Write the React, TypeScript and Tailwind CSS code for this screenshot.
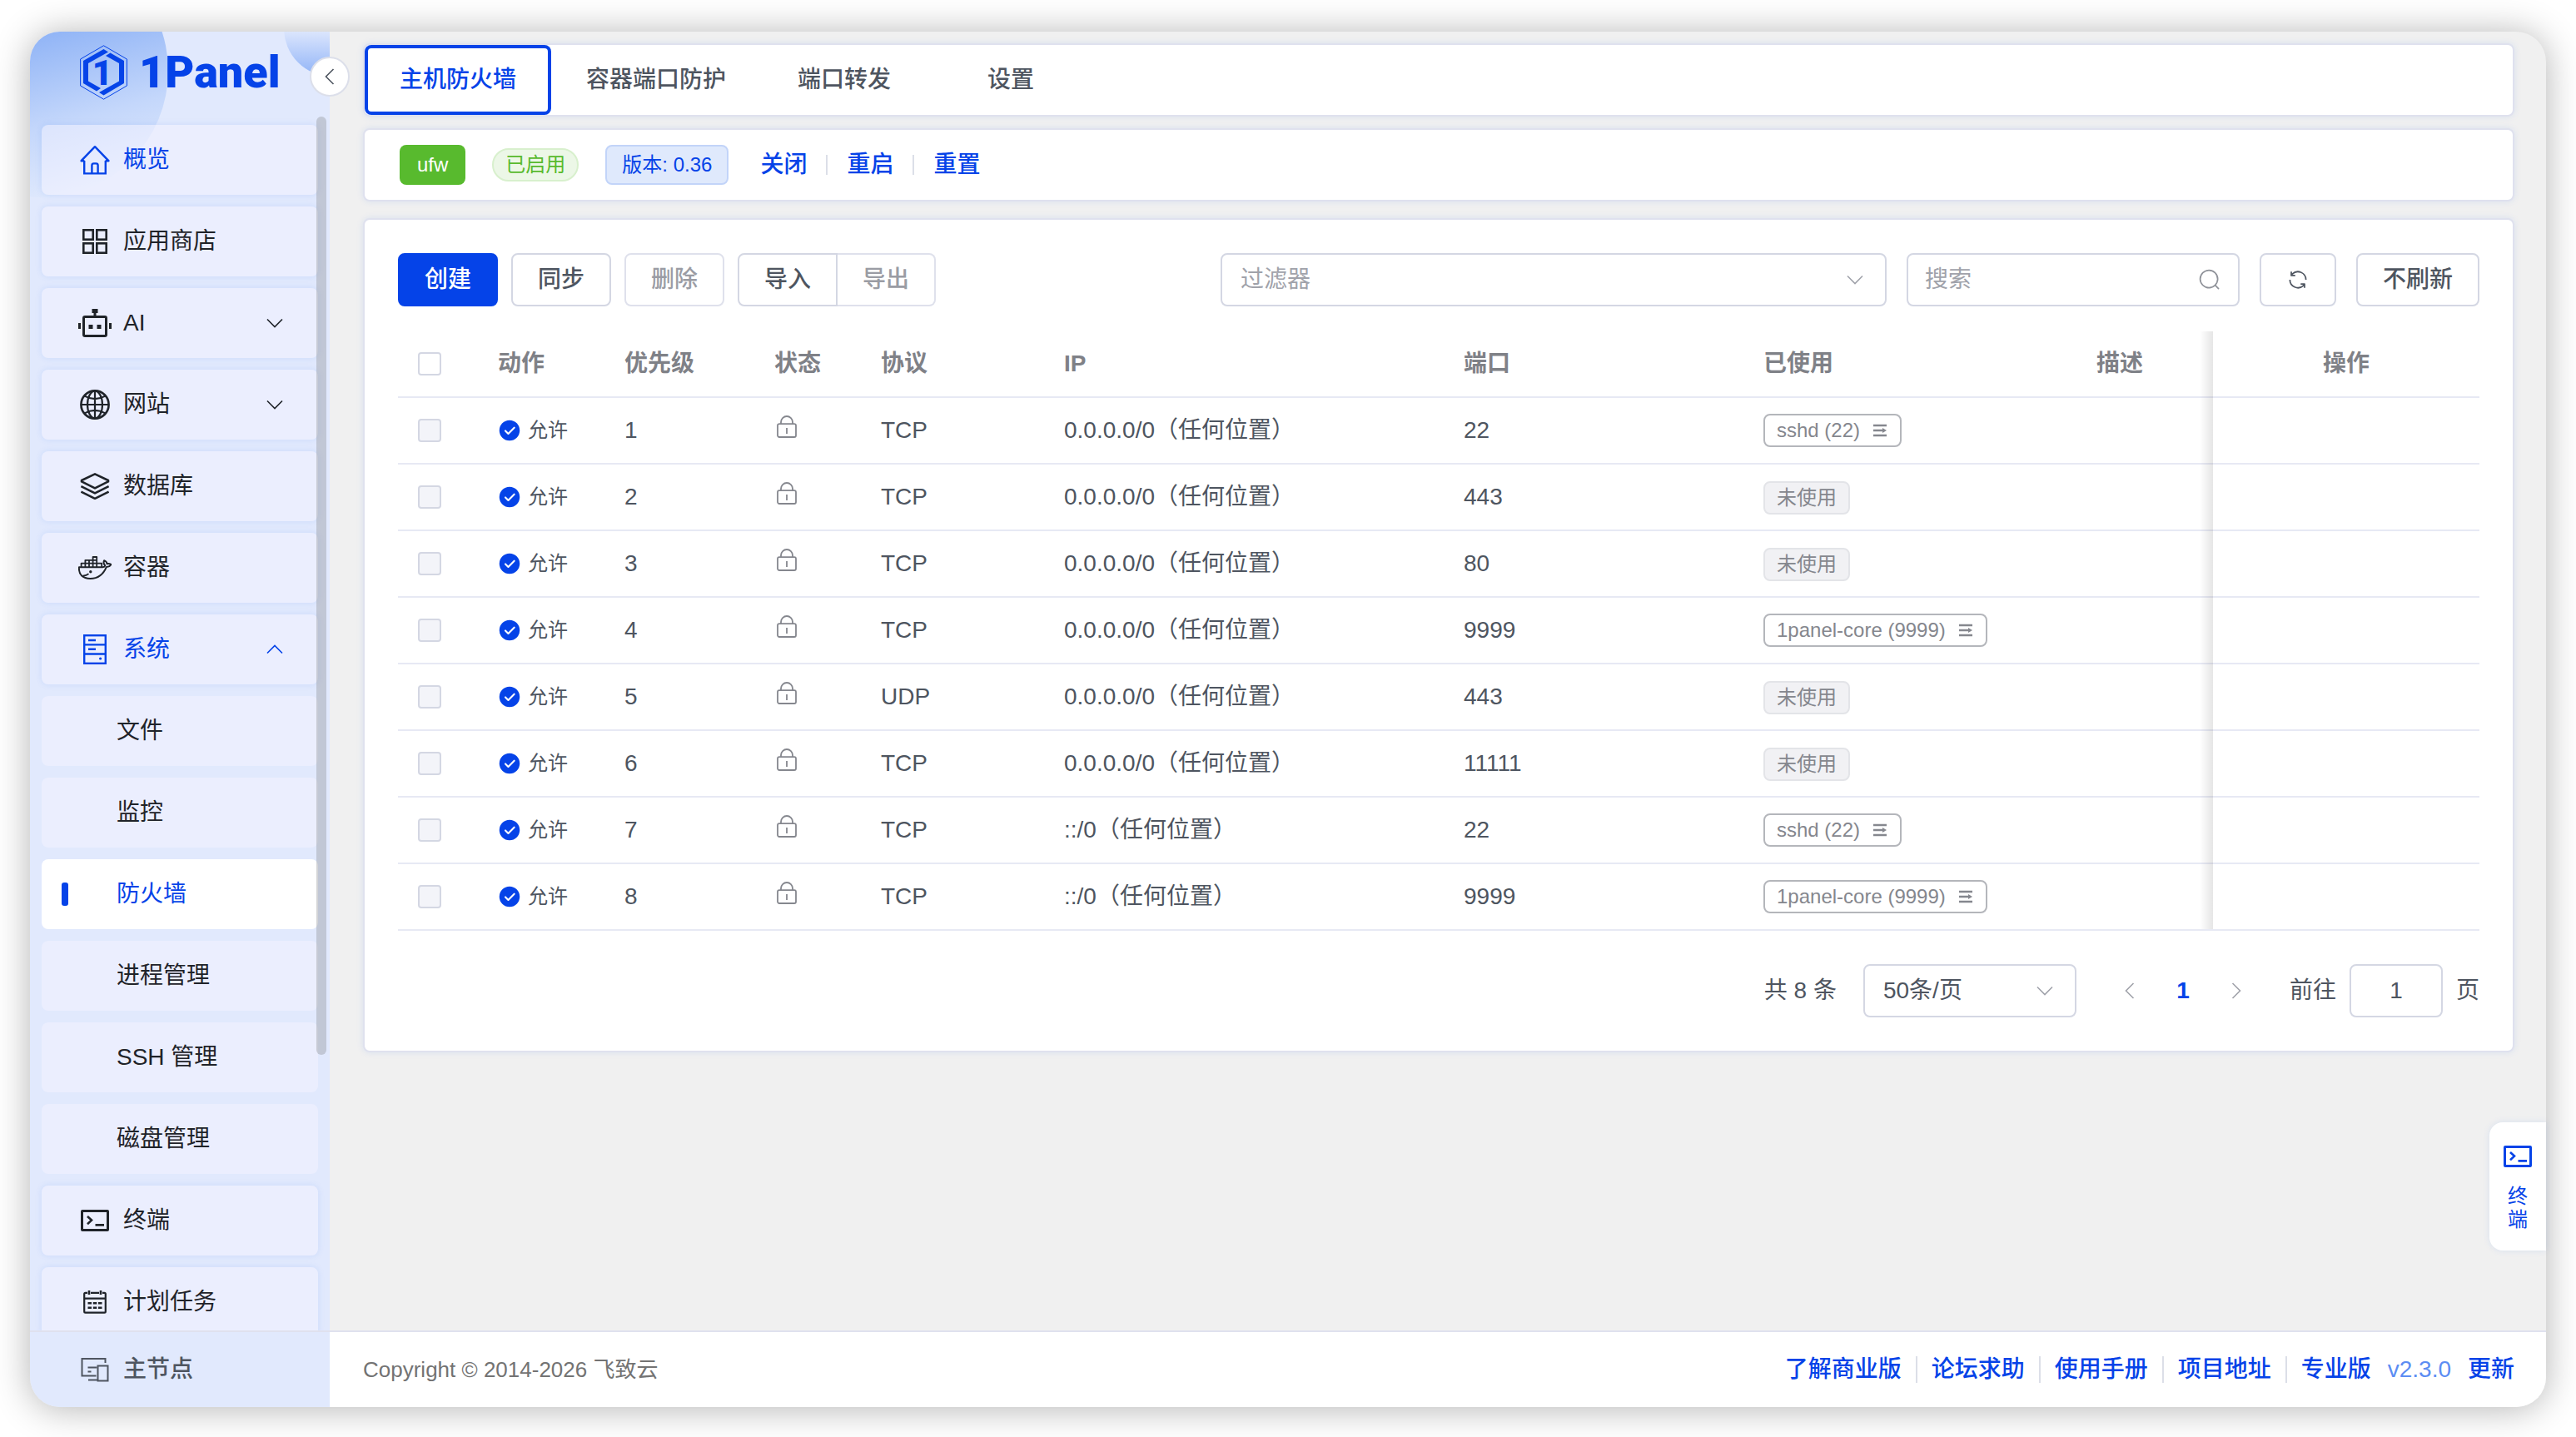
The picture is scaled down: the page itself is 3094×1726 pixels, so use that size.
import type { ReactNode } from "react";
import clsx from "clsx";

const ICONS: Record<string, ReactNode> = {
  home: (
    <svg className="w-9 h-9" viewBox="0 0 36 36" fill="none" stroke="currentColor" strokeWidth="2.4">
      <path d="M5.2 19v15.4h25.6V19" />
      <path d="M5.4 19.2H1.6L18 2.2l16.4 17h-3.8" strokeLinejoin="round" />
      <path d="M14.4 34V24.6q0-2.2 2.2-2.2h2.8q2.2 0 2.2 2.2V34" />
    </svg>
  ),
  apps: (
    <svg className="w-9 h-9" viewBox="0 0 36 36" fill="none" stroke="currentColor" strokeWidth="2.6">
      <rect x="4.3" y="4.3" width="11.4" height="11.4" />
      <rect x="20.3" y="4.3" width="11.4" height="11.4" />
      <rect x="4.3" y="20.3" width="11.4" height="11.4" />
      <rect x="20.3" y="20.3" width="11.4" height="11.4" />
    </svg>
  ),
  robot: (
    <svg className="w-10 h-10" viewBox="0 0 40 40" fill="none" stroke="currentColor" strokeWidth="3">
      <rect x="6.5" y="12.5" width="27" height="23" rx="1.5" />
      <path d="M20 12V4M1.5 20v7M38.5 20v7" />
      <path d="M16.500 3h7v5h-7zM12.5 22h5v5h-5zM22.5 22h5v5h-5z" fill="currentColor" stroke="none" />
    </svg>
  ),
  globe: (
    <svg className="w-9 h-9" viewBox="0 0 36 36" fill="none" stroke="currentColor" strokeWidth="2.2">
      <circle cx="18" cy="18" r="16.6" strokeWidth="2.6" />
      <ellipse cx="18" cy="18" rx="9" ry="16.4" />
      <path d="M18 1.5v33M1.5 18h33M5.5 7.6q12.5 7 25 0M5.5 28.4q12.5-7 25 0" />
    </svg>
  ),
  layers: (
    <svg className="w-9 h-9" viewBox="0 0 36 36" fill="none" stroke="currentColor" strokeWidth="2.6" strokeLinejoin="round">
      <path d="M18 3.4 34 11v1.4l-16 8-16-8V11z" />
      <path d="M1.4 18.2 18 26.4l16.6-8.2M1.4 24.6 18 32.8l16.6-8.2" />
    </svg>
  ),
  docker: (
    <svg className="w-10 h-7" viewBox="0 0 40 28" fill="none" stroke="currentColor" strokeWidth="1.8" strokeLinejoin="round">
      <path d="M3.6 13V8.6h24.6V13M8.4 13V4.8h13.8V13M13 4.8V13M17.6 13V1h4.6v4" />
      <path
        d="M.9 13.2h28.4q2.4-.2 3-2-2.8-2.4-1.2-6 3.2 1.4 3.4 4 2.6-.6 4.8.7-1 3-5.4 3C30.5 21 24.5 27 14.5 27 5.5 27 .4 22.5.9 13.2Z"
        strokeWidth="2"
      />
      <path d="M5.5 23.6q4.5 0 7-2.4" />
      <circle cx="14.8" cy="18.8" r="1.7" fill="currentColor" stroke="none" />
    </svg>
  ),
  server: (
    <svg className="w-9 h-9" viewBox="0 0 36 36" fill="none" stroke="currentColor" strokeWidth="2.4">
      <rect x="5.2" y="1.2" width="25.6" height="33.6" />
      <path d="M5 12.4h26M5 23.5h26M10 7h9M10 17.8h9" />
      <circle cx="24.6" cy="29" r="1.6" fill="currentColor" stroke="none" />
    </svg>
  ),
  terminal: (
    <svg className="w-9 h-9" viewBox="0 0 36 36" fill="none" stroke="currentColor" strokeWidth="3">
      <rect x="2.5" y="6.5" width="31" height="23" rx=".5" />
      <path d="m9 13 5 4.6-5 4.6M18.5 23.4H29" strokeWidth="2.6" />
    </svg>
  ),
  calendar: (
    <svg className="w-9 h-9" viewBox="0 0 36 36" fill="none" stroke="currentColor" strokeWidth="2.2">
      <path d="M9 6.8H6.6Q5.2 6.8 5.2 8.2v21q0 1.4 1.4 1.4h22.8q1.4 0 1.4-1.4v-21q0-1.4-1.4-1.4H27M13 6.8h10M5 13.6h26" />
      <path d="M11 4v5M25 4v5" strokeWidth="2.6" />
      <path d="M9.5 19.2h4.5M15.8 19.2h4.5M22 19.2h4.5M9.5 24.8h4.5M15.8 24.8h4.5M22 24.8h4.5" strokeWidth="2.4" />
    </svg>
  ),
};

type MenuItem = { label: string; icon?: string; arrow?: "down" | "up"; state?: "active" | "open" };

const MENU: MenuItem[] = [
  { label: "概览", icon: "home", state: "open" },
  { label: "应用商店", icon: "apps" },
  { label: "AI", icon: "robot", arrow: "down" },
  { label: "网站", icon: "globe", arrow: "down" },
  { label: "数据库", icon: "layers" },
  { label: "容器", icon: "docker" },
  { label: "系统", icon: "server", arrow: "up", state: "open" },
  { label: "文件" },
  { label: "监控" },
  { label: "防火墙", state: "active" },
  { label: "进程管理" },
  { label: "SSH 管理" },
  { label: "磁盘管理" },
  { label: "终端", icon: "terminal" },
  { label: "计划任务", icon: "calendar" },
];

const TABS = ["主机防火墙", "容器端口防护", "端口转发", "设置"];

const RULES = [
  { protocol: "TCP", ip: "0.0.0.0/0", port: "22", usedBy: "sshd (22)" },
  { protocol: "TCP", ip: "0.0.0.0/0", port: "443" },
  { protocol: "TCP", ip: "0.0.0.0/0", port: "80" },
  { protocol: "TCP", ip: "0.0.0.0/0", port: "9999", usedBy: "1panel-core (9999)" },
  { protocol: "UDP", ip: "0.0.0.0/0", port: "443" },
  { protocol: "TCP", ip: "0.0.0.0/0", port: "11111" },
  { protocol: "TCP", ip: "::/0", port: "22", usedBy: "sshd (22)" },
  { protocol: "TCP", ip: "::/0", port: "9999", usedBy: "1panel-core (9999)" },
];

const FOOTER_LINKS = ["了解商业版", "论坛求助", "使用手册", "项目地址"];

function Chevron({ dir, className }: { dir: "up" | "down" | "left" | "right"; className?: string }) {
  const d = {
    down: "M3 7.5 12 16.5 21 7.5",
    up: "M3 16.5 12 7.5 21 16.5",
    left: "M16.5 3 7.5 12 16.5 21",
    right: "M7.5 3 16.5 12 7.5 21",
  }[dir];
  return (
    <svg className={clsx("shrink-0", className)} viewBox="0 0 24 24" fill="none" stroke="currentColor" strokeWidth="1.6">
      <path d={d} />
    </svg>
  );
}

function Logo() {
  return (
    <a href="#home" className="flex items-center gap-[14px] text-[#0543e8]">
      <svg className="w-[57px] h-[66px]" viewBox="0 0 57 66">
        <path d="M28.5.8 56.4 17v32L28.5 65.2.6 49V17z" fill="none" stroke="currentColor" />
        <path d="M4 19 28.5 5l5.5 3.5L10 22v21.5l15 8.5-5 3.5L4 46z" fill="currentColor" />
        <path d="m31 13 5.5-3.5L53 19v27L28.5 60.5 23 57l24-13.5V22z" fill="currentColor" />
        <text
          x="27"
          y="48"
          textAnchor="middle"
          fontSize="42"
          fontWeight="900"
          fill="currentColor"
          fontFamily="Roboto,'Liberation Sans',sans-serif"
        >
          1
        </text>
      </svg>
      <span className="font-[Roboto,sans-serif] font-black text-[54px] leading-none">1Panel</span>
    </a>
  );
}

function Sidebar() {
  return (
    <aside className="relative flex w-[360px] shrink-0 flex-col rounded-l-[36px] bg-[#e1e9fd]">
      {/* Decorative circles behind the logo */}
      <div className="absolute inset-0 overflow-hidden rounded-l-[36px]">
        <div className="absolute -left-[138px] -top-[105px] size-[304px] rounded-full bg-[linear-gradient(165deg,#86adf5_32%,#c4d7fb_68%,#e1eafd_92%)]" />
        <div className="absolute -right-[61px] -top-[62px] size-[116px] rounded-full bg-linear-to-b from-[#e1e9fd] from-50% to-[#8fb2f6]" />
      </div>

      <div className="relative flex h-[102px] items-start px-[60px] pt-4">
        <Logo />
      </div>

      <nav className="relative flex min-h-0 flex-1 flex-col gap-[14px] overflow-hidden px-[14px] pt-[10px]">
        {MENU.map((item) => (
          <a
            key={item.label}
            href={`#${item.label}`}
            className={clsx(
              "relative flex h-[84px] shrink-0 items-center rounded-lg pr-10",
              item.icon ? "pl-[44px] shadow-[0_0_8px_rgba(0,94,235,0.1)]" : "pl-[90px]",
              item.state === "active" ? "bg-white" : "bg-[#f5f3ff]/50",
              item.state ? "text-[#0543e8]" : "text-[#1f2329]",
            )}
          >
            {item.state === "active" && <span className="absolute left-6 h-7 w-2 rounded-[3px] bg-[#0543e8]" />}
            {item.icon && <span className="mr-[14px] flex w-10 justify-center">{ICONS[item.icon]}</span>}
            <span className="flex-1">{item.label}</span>
            {item.arrow && <Chevron dir={item.arrow} className="size-6" />}
          </a>
        ))}
      </nav>

      {/* Scrollbar thumb */}
      <div className="absolute right-1 top-[102px] h-[1127px] w-3 rounded-full bg-[#909399]/40" />

      <button
        type="button"
        aria-label="收起菜单"
        className="absolute -right-6 top-[30px] z-10 flex size-12 items-center justify-center rounded-full border-2 border-[#dcdfea] bg-white text-[#4e5560]"
      >
        <Chevron dir="left" className="size-6" />
      </button>

      <button
        type="button"
        className="relative flex h-[92px] shrink-0 items-center gap-4 border-t-2 border-[#dfe1ee] pl-[60px] font-medium text-[#4e5560]"
      >
        <svg className="size-9" viewBox="0 0 36 36" fill="none" stroke="currentColor" strokeWidth="2">
          <path d="M30.5 10V5H2.5v20.5h17M10 30.5h11M9.5 15.5h11M9.5 20.5h4" />
          <rect x="21.5" y="13.5" width="12" height="18" />
        </svg>
        主节点
      </button>
    </aside>
  );
}

function Card({ className, children }: { className?: string; children: ReactNode }) {
  return (
    <section
      className={clsx("rounded-lg border-2 border-[#dfe1ee] bg-white shadow-[0_0_8px_rgba(0,94,235,0.1)]", className)}
    >
      {children}
    </section>
  );
}

function Button({ className, children, ...rest }: React.ComponentProps<"button">) {
  return (
    <button
      type="button"
      className={clsx("flex h-16 min-w-[92px] items-center justify-center border-2 font-medium", className)}
      {...rest}
    >
      {children}
    </button>
  );
}

const BTN_PLAIN = "rounded-lg border-[#d4d7e3] bg-white text-[#4e5560]";
const BTN_DISABLED = "rounded-lg border-[#dfe1ec] bg-white text-[#9a9ca4]";

function Toolbar() {
  return (
    <div className="flex items-center justify-between">
      <div className="flex gap-4">
        <Button className="w-[120px] rounded-lg border-[#0543e8] bg-[#0543e8] text-white">创建</Button>
        <Button className={clsx("w-[120px]", BTN_PLAIN)}>同步</Button>
        <Button className={clsx("w-[120px]", BTN_DISABLED)} disabled>
          删除
        </Button>
        <div className="flex">
          <Button className="w-[120px] rounded-l-lg border-[#d4d7e3] bg-white text-[#4e5560]">导入</Button>
          <Button className="w-[118px] rounded-r-lg border-l-0 border-[#dfe1ec] bg-white text-[#9a9ca4]" disabled>
            导出
          </Button>
        </div>
      </div>
      <div className="flex gap-6">
        <div className="relative w-[800px]">
          <select
            aria-label="过滤器"
            className="h-16 w-full appearance-none rounded-lg border-2 border-[#d4d7e3] bg-white pl-[22px] text-[#a0a2aa]"
          >
            <option>过滤器</option>
          </select>
          <Chevron dir="down" className="pointer-events-none absolute right-[26px] top-5 size-6 text-[#a0a2aa]" />
        </div>
        <div className="relative w-[400px]">
          <input
            type="text"
            aria-label="搜索"
            placeholder="搜索"
            className="h-16 w-full rounded-lg border-2 border-[#d4d7e3] bg-white pl-5 placeholder:text-[#a0a2aa]"
          />
          <svg className="absolute right-[22px] top-[18px] size-7 text-[#8f9299]" viewBox="0 0 1024 1024" fill="currentColor">
            <path d="m795.904 750.72 124.992 124.928a32 32 0 0 1-45.248 45.248L750.656 795.904a416 416 0 1 1 45.248-45.248zM480 832a352 352 0 1 0 0-704 352 352 0 0 0 0 704" />
          </svg>
        </div>
        <Button className={clsx("w-[92px]", BTN_PLAIN)} aria-label="刷新">
          <svg className="size-7" viewBox="0 0 1024 1024" fill="currentColor">
            <path d="M771.776 794.88A384 384 0 0 1 128 512h64a320 320 0 0 0 555.712 216.448H654.72a32 32 0 1 1 0-64h149.056a32 32 0 0 1 32 32v148.928a32 32 0 1 1-64 0v-50.56zM276.288 295.616h92.992a32 32 0 0 1 0 64H220.16a32 32 0 0 1-32-32V178.56a32 32 0 0 1 64 0v50.56A384 384 0 0 1 896.128 512h-64a320 320 0 0 0-555.776-216.384z" />
          </svg>
        </Button>
        <Button className={clsx("w-[148px]", BTN_PLAIN)}>不刷新</Button>
      </div>
    </div>
  );
}

function RuleTable() {
  const cell = "h-20 border-b-2 border-[#e7e9f4] px-6";
  return (
    <div className="relative mt-[30px]">
      <table className="w-full table-fixed border-separate border-spacing-0 text-left">
        <colgroup>
          <col className="w-24" />
          <col className="w-[152px]" />
          <col className="w-[180px]" />
          <col className="w-[128px]" />
          <col className="w-[220px]" />
          <col className="w-[480px]" />
          <col className="w-[360px]" />
          <col className="w-[400px]" />
          <col />
          <col className="w-[320px]" />
        </colgroup>
        <thead>
          <tr className="text-[#7f8187]">
            <th className={cell}>
              <input
                type="checkbox"
                aria-label="全选"
                className="block size-7 appearance-none rounded border-2 border-[#d4d7e3] bg-white"
              />
            </th>
            {["动作", "优先级", "状态", "协议", "IP", "端口", "已使用", "描述"].map((title) => (
              <th key={title} className={clsx(cell, "font-semibold")}>
                {title}
              </th>
            ))}
            <th className={clsx(cell, "text-center font-semibold")}>操作</th>
          </tr>
        </thead>
        <tbody>
          {RULES.map((rule, i) => (
            <tr key={i}>
              <td className={cell}>
                <input
                  type="checkbox"
                  disabled
                  aria-label={`选择 ${i + 1}`}
                  className="block size-7 appearance-none rounded border-2 border-[#d4d7e3] bg-[#f3f4f9]"
                />
              </td>
              <td className={cell}>
                <span className="flex items-center gap-2 text-2xl">
                  <svg className="size-7 text-[#0543e8]" viewBox="0 0 1024 1024" fill="currentColor">
                    <path d="M512 64a448 448 0 1 1 0 896 448 448 0 0 1 0-896m-55.808 536.384-99.52-99.584a38.4 38.4 0 1 0-54.336 54.336l126.72 126.72a38.272 38.272 0 0 0 54.336 0l262.4-262.464a38.4 38.4 0 1 0-54.272-54.336z" />
                  </svg>
                  允许
                </span>
              </td>
              <td className={cell}>{i + 1}</td>
              <td className={cell}>
                <svg className="mb-2 h-7 w-[30px] text-[#85878e]" viewBox="0 0 30 28" fill="none" stroke="currentColor" strokeWidth="1.8">
                  <rect x="4" y="10.2" width="22" height="15.8" rx="2" />
                  <path d="M8 10V8a7 7 0 0 1 14 0v2M15 15v7" />
                </svg>
              </td>
              <td className={cell}>{rule.protocol}</td>
              <td className={cell}>{rule.ip}（任何位置）</td>
              <td className={cell}>{rule.port}</td>
              <td className={cell}>
                {rule.usedBy ? (
                  <button
                    type="button"
                    className="flex h-10 items-center gap-4 rounded-lg border-2 border-[#b4b6bb] px-4 pl-[14px] text-2xl text-[#85878e]"
                  >
                    {rule.usedBy}
                    <svg className="h-4 w-4" viewBox="0 0 16 16" fill="none" stroke="currentColor" strokeWidth="2.4">
                      <path d="M0 2h16M0 8h12M0 14h16" />
                      <path d="M11 5 16 8 11 11z" fill="currentColor" stroke="none" />
                    </svg>
                  </button>
                ) : (
                  <span className="inline-flex h-10 items-center rounded-lg border-2 border-[#e3e4e8] bg-[#f1f1f4] px-[14px] align-middle text-2xl text-[#85878e]">
                    未使用
                  </span>
                )}
              </td>
              <td className={cell} />
              <td className={cell} />
            </tr>
          ))}
        </tbody>
      </table>
      {/* Shadow cast by the fixed column */}
      <div className="pointer-events-none absolute bottom-0.5 right-[320px] top-0 w-4 bg-linear-to-r from-transparent to-black/10" />
    </div>
  );
}

function Pagination() {
  return (
    <div className="mt-10 flex items-center justify-end gap-8">
      <span>共 8 条</span>
      <div className="relative w-64">
        <select
          aria-label="每页条数"
          className="h-16 w-full appearance-none rounded-lg border-2 border-[#d4d7e3] bg-white pl-[22px]"
        >
          <option>50条/页</option>
        </select>
        <Chevron dir="down" className="pointer-events-none absolute right-[26px] top-5 size-6 text-[#a0a2aa]" />
      </div>
      <div className="flex">
        <button type="button" aria-label="上一页" className="flex size-16 items-center justify-center text-[#a0a2aa]" disabled>
          <Chevron dir="left" className="size-6" />
        </button>
        <button type="button" className="size-16 font-bold text-[#0543e8]">
          1
        </button>
        <button type="button" aria-label="下一页" className="flex size-16 items-center justify-center text-[#a0a2aa]" disabled>
          <Chevron dir="right" className="size-6" />
        </button>
      </div>
      <label className="flex items-center gap-4">
        前往
        <input
          type="text"
          defaultValue="1"
          className="h-16 w-[112px] rounded-lg border-2 border-[#d4d7e3] bg-white text-center"
        />
        页
      </label>
    </div>
  );
}

function Footer() {
  return (
    <footer className="flex h-[92px] shrink-0 items-center justify-between rounded-br-[36px] border-t-2 border-[#dfe1ee] bg-white pl-10 pr-[38px]">
      <span className="text-[26px] text-[#737373]">Copyright © 2014-2026 飞致云</span>
      <div className="flex items-center font-medium text-[#0543e8]">
        {FOOTER_LINKS.map((link) => (
          <span key={link} className="flex items-center">
            <a href={`#${link}`}>{link}</a>
            <span className="mx-[17px] h-8 w-0.5 bg-[#dcdfe8]" />
          </span>
        ))}
        <div className="flex items-center gap-5">
          <a href="#pro">专业版</a>
          <span className="font-normal text-[#5c8df3]">v2.3.0</span>
          <a href="#update">更新</a>
        </div>
      </div>
    </footer>
  );
}

export default function App() {
  return (
    <div className="h-screen bg-white px-9 pb-9 pt-[38px] font-['Liberation_Sans','Noto_Sans_CJK_SC',sans-serif] text-[28px] leading-10 text-[#4e5560]">
      <div className="relative flex h-full rounded-[36px] bg-[#f0f0f0] shadow-[0_2px_44px_rgba(0,0,0,0.3)]">
        <Sidebar />

        <div className="flex min-w-0 flex-1 flex-col">
          <main className="flex min-h-0 flex-1 flex-col pl-10 pr-[38px] pt-[14px]">
            <Card className="flex h-[88px] shrink-0">
              {TABS.map((tab, i) => (
                <button
                  key={tab}
                  type="button"
                  className={clsx(
                    "h-full min-w-[200px] px-[42px] font-medium",
                    i === 0 && "rounded-lg text-[#0543e8] inset-ring-4 inset-ring-[#0543e8]",
                  )}
                >
                  {tab}
                </button>
              ))}
            </Card>

            <Card className="mt-[14px] flex h-[88px] shrink-0 items-center px-[42px]">
              <span className="flex h-12 items-center rounded-lg bg-[#58ba2e] px-[21px] text-2xl text-white">ufw</span>
              <span className="ml-8 flex h-10 items-center rounded-full border-2 border-[#d8f0cd] bg-[#ecf7e7] px-[14px] text-2xl text-[#58ba2e]">
                已启用
              </span>
              <span className="ml-8 flex h-12 items-center rounded-lg border-2 border-[#c2d4f9] bg-[#dfe9fc] px-[18px] text-2xl text-[#0543e8]">
                版本: 0.36
              </span>
              <div className="ml-[38px] flex items-center font-medium text-[#0543e8]">
                <button type="button">关闭</button>
                <span className="mx-[23px] h-6 w-0.5 bg-[#dcdfe8]" />
                <button type="button">重启</button>
                <span className="mx-[23px] h-6 w-0.5 bg-[#dcdfe8]" />
                <button type="button">重置</button>
              </div>
            </Card>

            <Card className="mt-5 p-10">
              <Toolbar />
              <RuleTable />
              <Pagination />
            </Card>
          </main>
          <Footer />
        </div>

        {/* Docked terminal handle */}
        <button
          type="button"
          className="absolute bottom-[188px] right-0 flex h-[154px] w-[68px] flex-col items-center justify-center gap-4 rounded-l-2xl bg-white text-2xl leading-7 text-[#0543e8] shadow-[0_0_8px_rgba(0,94,235,0.1)]"
        >
          <span>{ICONS.terminal}</span>
          <span className="w-6">终端</span>
        </button>
      </div>
    </div>
  );
}
